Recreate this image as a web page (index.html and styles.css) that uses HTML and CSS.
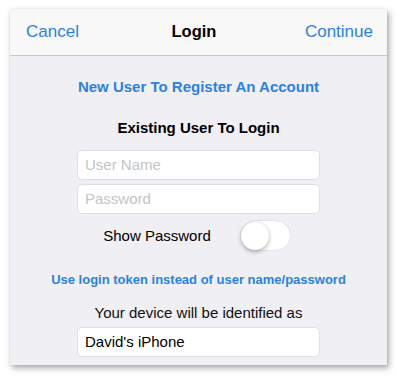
FILE: index.html
```html
<!DOCTYPE html>
<html>
<head>
<meta charset="utf-8">
<link rel="stylesheet" href="styles.css">
</head>
<body>
<div class="panel">
  <div class="navbar">
    <span class="nav-btn">Cancel</span>
    <span class="nav-title">Login</span>
    <span class="nav-btn">Continue</span>
  </div>
  <div class="content">
    <div class="link-big">New User To Register An Account</div>
    <div class="section-title">Existing User To Login</div>
    <div class="field placeholder first">User Name</div>
    <div class="field placeholder second">Password</div>
    <div class="toggle-row">
      <span class="toggle-label">Show Password</span>
      <span class="toggle"><span class="knob"></span></span>
    </div>
    <div class="link-small">Use login token instead of user name/password</div>
    <div class="device-label">Your device will be identified as</div>
    <div class="field value">David's iPhone</div>
  </div>
</div>
</body>
</html>
```
FILE: styles.css
```css
html, body {
  margin: 0;
  padding: 0;
  background: #ffffff;
}
body {
  font-family: "Liberation Sans", Arial, sans-serif;
  width: 400px;
  height: 377px;
  overflow: hidden;
}
.panel {
  margin: 9px 0 0 10px;
  width: 377px;
  height: 356px;
  background: #efeff4;
  box-shadow: 2px 3px 6px rgba(0, 0, 0, 0.35), 0 0 2px rgba(0, 0, 0, 0.08);
  display: flex;
  flex-direction: column;
}
.navbar {
  height: 45px;
  background: #f8f8f9;
  border-bottom: 1px solid #c8c7cc;
  display: flex;
  align-items: center;
  justify-content: space-between;
  padding: 0 14px 1px 16px;
  font-size: 17px;
  box-sizing: content-box;
}
.nav-btn {
  color: #2a82e2;
}
.nav-title {
  font-weight: bold;
  color: #000;
  font-size: 16.5px;
  margin-left: 4px;
}
.content {
  display: flex;
  flex-direction: column;
  align-items: center;
}
.link-big {
  margin-top: 22px;
  font-size: 15px;
  line-height: 18px;
  font-weight: bold;
  color: #2a82e2;
}
.section-title {
  margin-top: 23px;
  font-size: 15px;
  line-height: 18px;
  font-weight: bold;
  color: #000;
}
.field {
  box-sizing: border-box;
  width: 243px;
  height: 30px;
  background: #fff;
  border: 1px solid #dfdfe4;
  border-radius: 5px;
  padding: 0 7px;
  font-size: 15px;
  line-height: 28px;
}
.placeholder {
  color: #c4c4c9;
}
.first {
  margin-top: 13px;
}
.second {
  margin-top: 4px;
}
.toggle-row {
  margin-top: 6px;
  display: flex;
  align-items: center;
  gap: 29px;
  margin-right: 3px;
}
.toggle-label {
  font-size: 15px;
  line-height: 18px;
  color: #000;
}
.toggle {
  box-sizing: border-box;
  width: 51px;
  height: 31px;
  border-radius: 16px;
  background: #fff;
  border: 1px solid #e4e4e8;
  display: flex;
  align-items: center;
  padding-left: 0;
}
.knob {
  width: 28px;
  height: 28px;
  border-radius: 50%;
  background: #fff;
  box-shadow: 0 2px 4px rgba(0, 0, 0, 0.28), 0 0 1px rgba(0, 0, 0, 0.2);
}
.link-small {
  margin-top: 21px;
  font-size: 13px;
  line-height: 16px;
  font-weight: bold;
  color: #2a82e2;
}
.device-label {
  margin-top: 16px;
  font-size: 15px;
  line-height: 18px;
  color: #111;
}
.value {
  margin-top: 5px;
  color: #000;
}
```
